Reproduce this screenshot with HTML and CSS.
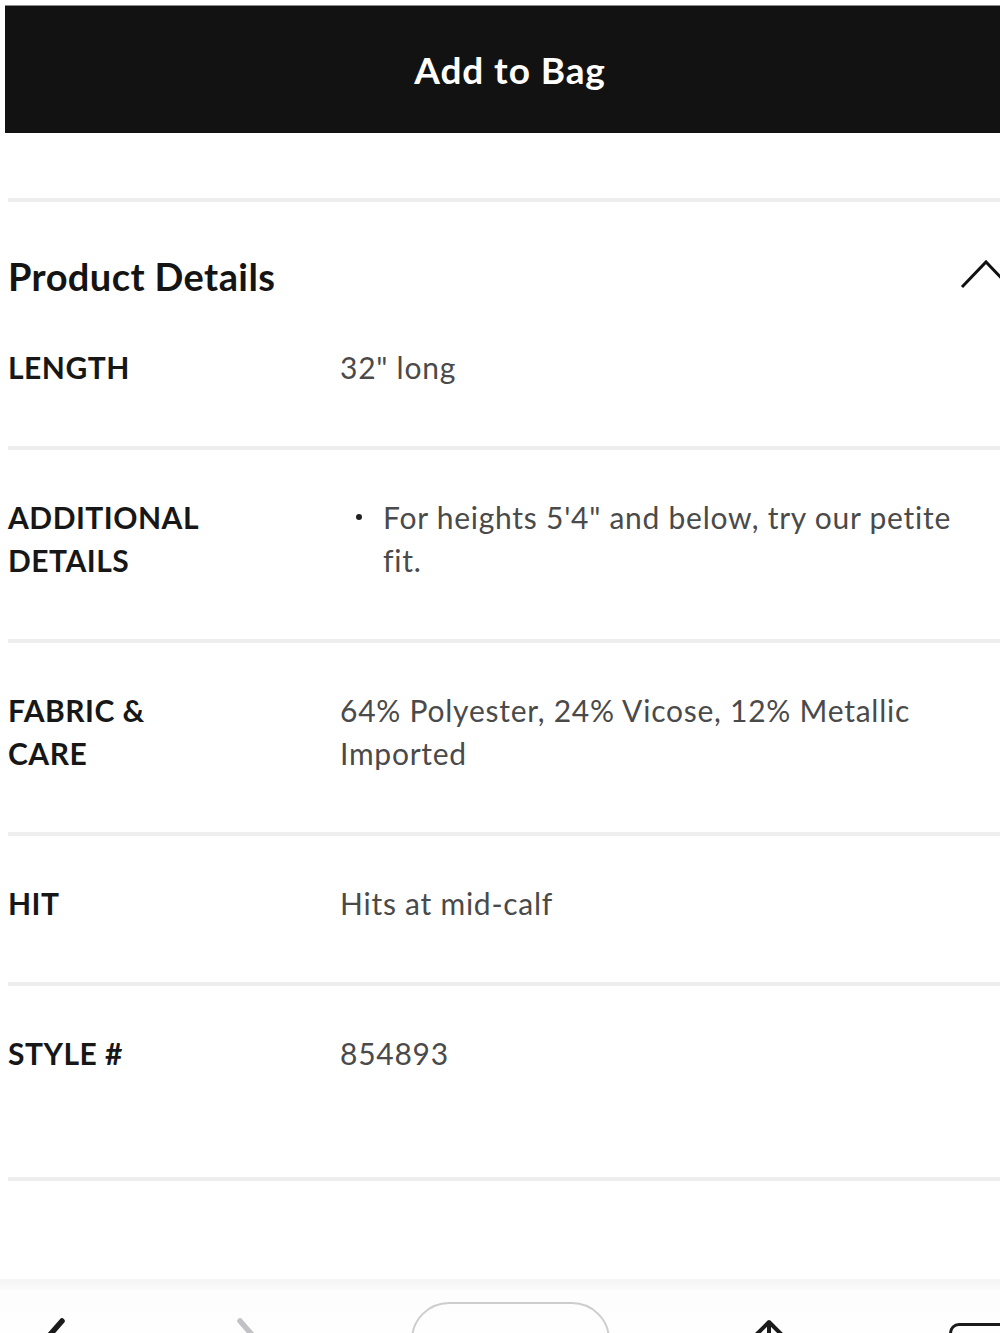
FILE: index.html
```html
<!DOCTYPE html>
<html lang="en">
<head>
<meta charset="utf-8">
<title>Product Details</title>
<link rel="stylesheet" href="styles.css">
</head>
<body>
<div class="page">
  <button class="add-btn">Add to Bag</button>

  <section class="details">
    <header class="details-head">
      <h2 class="details-title">Product Details</h2>
      <svg class="chevron" width="52" height="32" viewBox="0 0 52 32" aria-hidden="true">
        <polyline points="2,29 26,4 50,29" fill="none" stroke="#111" stroke-width="3" stroke-linejoin="miter"/>
      </svg>
    </header>

    <div class="row">
      <div class="label">LENGTH</div>
      <div class="value">32" long</div>
    </div>
    <div class="row">
      <div class="label">ADDITIONAL<br>DETAILS</div>
      <ul class="value bullets">
        <li>For heights 5'4" and below, try our petite fit.</li>
      </ul>
    </div>
    <div class="row">
      <div class="label">FABRIC &amp;<br>CARE</div>
      <div class="value">64% Polyester, 24% Vicose, 12% Metallic<br>Imported</div>
    </div>
    <div class="row">
      <div class="label">HIT</div>
      <div class="value">Hits at mid-calf</div>
    </div>
    <div class="row last">
      <div class="label">STYLE #</div>
      <div class="value">854893</div>
    </div>
  </section>

  <nav class="toolbar">
    <svg class="tb-back" width="30" height="40" viewBox="0 0 30 40" aria-hidden="true">
      <polyline points="22,6 8,22 22,38" fill="none" stroke="#1b1b1b" stroke-width="5.5" stroke-linecap="round" stroke-linejoin="round"/>
    </svg>
    <svg class="tb-fwd" width="30" height="40" viewBox="0 0 30 40" aria-hidden="true">
      <polyline points="8,6 22,22 8,38" fill="none" stroke="#c2c2c6" stroke-width="5.5" stroke-linecap="round" stroke-linejoin="round"/>
    </svg>
    <div class="tb-pill"></div>
    <svg class="tb-share" width="34" height="40" viewBox="0 0 34 40" aria-hidden="true">
      <polyline points="5,15 17,3 29,15" fill="none" stroke="#1b1b1b" stroke-width="4" stroke-linecap="round" stroke-linejoin="round"/>
      <line x1="17" y1="4" x2="17" y2="36" stroke="#1b1b1b" stroke-width="4" stroke-linecap="round"/>
    </svg>
    <div class="tb-tabs"></div>
  </nav>
</div>
</body>
</html>
```

FILE: styles.css
```css
html, body {
  margin: 0;
  padding: 0;
  background: #ffffff;
}

body {
  width: 1000px;
  height: 1333px;
  overflow: hidden;
  font-family: "Lato", "Noto Sans", sans-serif;
  color: #1a1a1a;
}

.page {
  width: 1030px;
  display: flex;
  flex-direction: column;
}

.add-btn {
  display: block;
  margin: 5px 0 0 5px;
  width: 1010px;
  height: 128px;
  border: none;
  border-top: 1px solid #8a8a8a;
  background: #121212;
  color: #ffffff;
  font-family: "Lato", "Noto Sans", sans-serif;
  font-size: 37px;
  font-weight: 700;
  letter-spacing: 0.9px;
  padding: 0;
  cursor: pointer;
}

.details {
  margin: 65px 0 0 8px;
  width: 1010px;
  border-top: 4px solid #eeeeee;
}

.details-head {
  display: flex;
  align-items: center;
  justify-content: space-between;
  padding-top: 50px;
  height: 48px;
}

.details-title {
  margin: 0;
  font-size: 38px;
  line-height: 48px;
  font-weight: 700;
  color: #141414;
  letter-spacing: 0.4px;
}

.chevron {
  margin-right: 6px;
  margin-top: -4px;
}

.row {
  display: grid;
  grid-template-columns: 332px 1fr;
  padding: 46px 0 57px;
  border-bottom: 4px solid #eeeeee;
  font-size: 30px;
  line-height: 43px;
}

.row.last {
  padding-bottom: 102px;
}

.label {
  font-weight: 700;
  color: #171717;
  letter-spacing: 0.5px;
}

.value {
  color: #4a4a4a;
  font-weight: 400;
  letter-spacing: 0.75px;
  padding-right: 26px;
}

.bullets {
  list-style: none;
  margin: 0;
  padding: 0 40px 0 43px;
}

.bullets li {
  position: relative;
}

.bullets li::before {
  content: "";
  position: absolute;
  left: -27px;
  top: 18px;
  width: 6px;
  height: 6px;
  border-radius: 50%;
  background: #222222;
}

.toolbar {
  margin-top: 98px;
  height: 110px;
  display: flex;
  align-items: flex-start;
  background: linear-gradient(#f4f4f4, #f9f9f9 9px, #fdfdfd 12px, #ffffff);
}

.tb-back {
  margin: 36px 0 0 40px;
}

.tb-fwd {
  margin: 36px 0 0 162px;
}

.tb-pill {
  margin: 23px 0 0 149px;
  width: 195px;
  height: 80px;
  border: 2px solid #cdcdcd;
  border-radius: 38px;
}

.tb-share {
  margin: 40px 0 0 142px;
}

.tb-tabs {
  margin: 44px 0 0 163px;
  width: 62px;
  height: 56px;
  border: 3.5px solid #1b1b1b;
  border-radius: 10px;
}
```
